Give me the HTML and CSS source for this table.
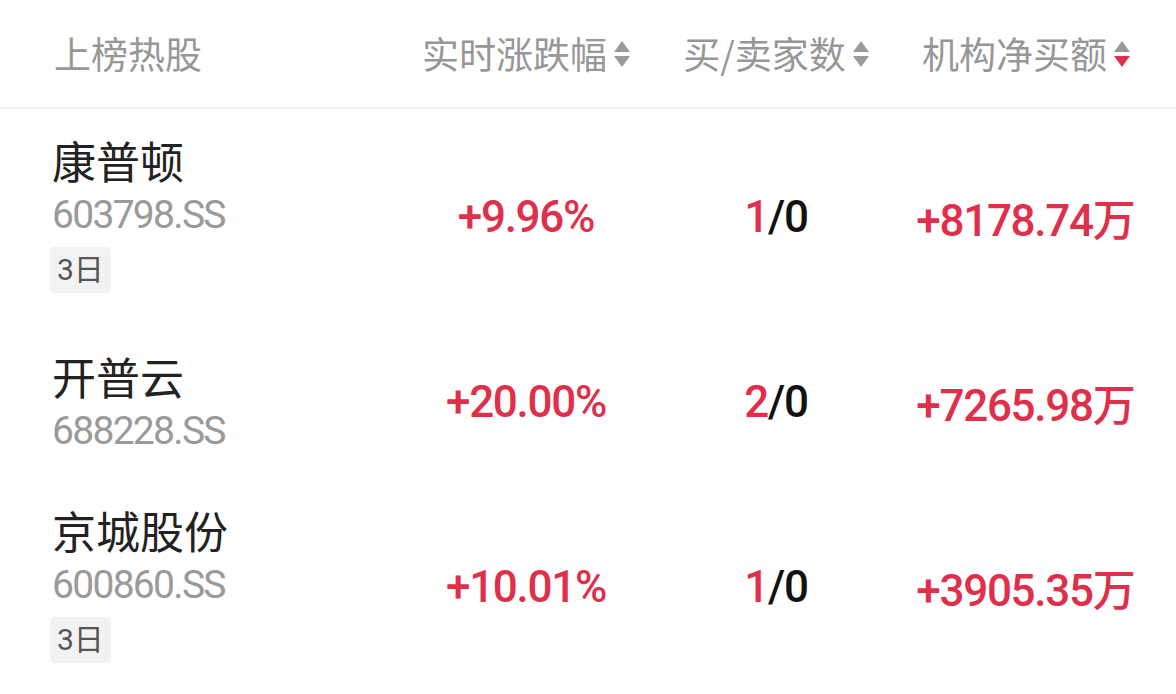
FILE: index.html
```html
<!DOCTYPE html>
<html lang="zh">
<head>
<meta charset="utf-8">
<link rel="stylesheet" href="styles.css">
</head>
<body>
<div class="table">
  <div class="head">
    <div class="hcell first">上榜热股</div>
    <div class="hcell">实时涨跌幅<span class="sort"><i class="up"></i><i class="down"></i></span></div>
    <div class="hcell">买/卖家数<span class="sort"><i class="up"></i><i class="down"></i></span></div>
    <div class="hcell">机构净买额<span class="sort"><i class="up"></i><i class="down active"></i></span></div>
  </div>

  <div class="row">
    <div class="stock">
      <div class="name">康普顿</div>
      <div class="code">603798.SS</div>
      <div class="tag">3日</div>
    </div>
    <div class="val red">+9.96%</div>
    <div class="val"><span class="red">1</span>/0</div>
    <div class="val red">+8178.74<span class="wan">万</span></div>
  </div>

  <div class="row">
    <div class="stock">
      <div class="name">开普云</div>
      <div class="code">688228.SS</div>
    </div>
    <div class="val red">+20.00%</div>
    <div class="val"><span class="red">2</span>/0</div>
    <div class="val red">+7265.98<span class="wan">万</span></div>
  </div>

  <div class="row">
    <div class="stock">
      <div class="name">京城股份</div>
      <div class="code">600860.SS</div>
      <div class="tag">3日</div>
    </div>
    <div class="val red">+10.01%</div>
    <div class="val"><span class="red">1</span>/0</div>
    <div class="val red">+3905.35<span class="wan">万</span></div>
  </div>
</div>
</body>
</html>
```

FILE: styles.css
```css
html, body {
  margin: 0;
  padding: 0;
  background: #ffffff;
}
body {
  font-family: "Noto Sans CJK SC", "Noto Sans", sans-serif;
  width: 1176px;
  height: 694px;
  overflow: hidden;
}
.table {
  display: flex;
  flex-direction: column;
}
.head, .row {
  display: grid;
  grid-template-columns: 349px 250px 250px 250px;
  padding-left: 52px;
  padding-right: 25px;
}
.head {
  height: 107px;
  align-items: center;
  border-bottom: 2px solid #f2f2f2;
}
.hcell {
  font-size: 37px;
  color: #979797;
  display: flex;
  align-items: center;
  justify-content: center;
  line-height: 1;
  white-space: nowrap;
}
.hcell.first {
  justify-content: flex-start;
  padding-left: 2px;
}
.sort {
  display: flex;
  flex-direction: column;
  gap: 4px;
  margin-left: 7px;
}
.sort i {
  display: block;
  width: 0;
  height: 0;
  border-left: 8px solid transparent;
  border-right: 8px solid transparent;
}
.sort .up {
  border-bottom: 11px solid #9a9a9a;
}
.sort .down {
  border-top: 11px solid #9a9a9a;
}
.sort .down.active {
  border-top-color: #e0304b;
}
.row {
  padding-top: 25px;
  padding-bottom: 25px;
  align-items: center;
}
.stock {
  display: flex;
  flex-direction: column;
  align-items: flex-start;
}
.name {
  font-size: 44px;
  line-height: 52px;
  color: #222222;
}
.code {
  font-family: Roboto, "Liberation Sans", sans-serif;
  font-size: 39px;
  letter-spacing: -1.7px;
  line-height: 52px;
  padding-top: 3px;
  margin-bottom: -3px;
  color: #9a9a9a;
}
.tag {
  margin-top: 9px;
  margin-bottom: 7px;
  height: 46px;
  line-height: 46px;
  padding: 0 7px;
  margin-left: -2px;
  border-radius: 4px;
  background: #f2f2f2;
  color: #555555;
  font-size: 30px;
  font-family: Roboto, "Noto Sans CJK SC", sans-serif;
}
.val {
  font-family: Roboto, "Liberation Sans", sans-serif;
  font-size: 44px;
  font-weight: 500;
  letter-spacing: -1.3px;
  text-align: center;
  color: #111111;
  white-space: nowrap;
}
.red {
  color: #df2f4b;
}
.wan {
  font-family: "Noto Sans CJK SC", sans-serif;
  font-size: 43px;
  font-weight: 500;
  letter-spacing: 0;
}
```
